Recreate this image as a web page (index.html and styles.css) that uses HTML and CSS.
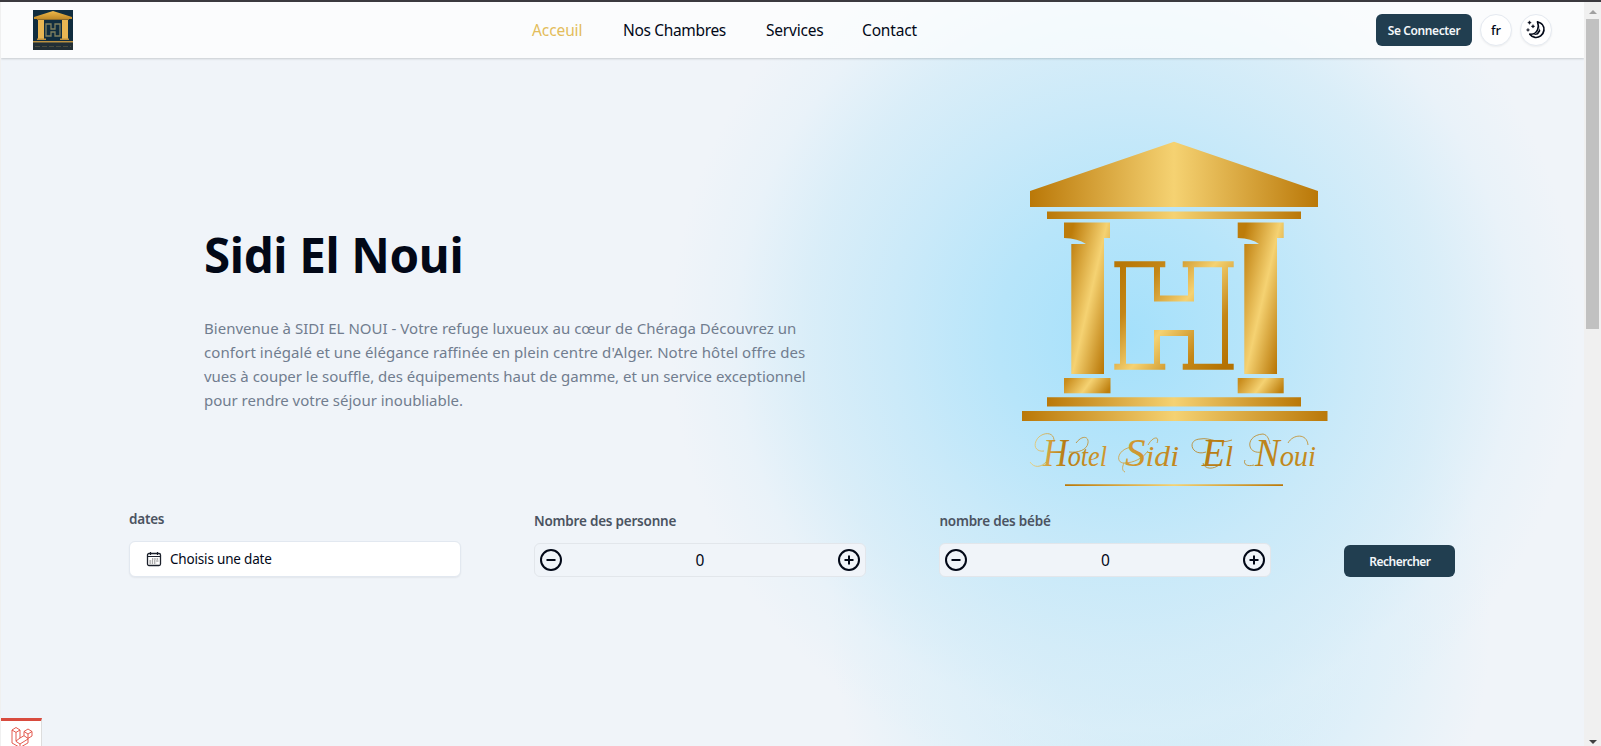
FILE: index.html
```html
<!DOCTYPE html>
<html lang="fr">
<head>
<meta charset="utf-8">
<title>Sidi El Noui</title>
<link rel="stylesheet" href="styles.css">
</head>
<body>
<div class="window">
<div class="page">
  <header class="header">
    <svg class="brand" viewBox="0 0 40 40">
      <defs>
        <linearGradient id="gs" x1="0" x2="0" y1="0" y2="1"><stop offset="0" stop-color="#f0b94a"/><stop offset="1" stop-color="#c08a28"/></linearGradient>
      </defs>
      <rect width="40" height="40" fill="#102d3f"/>
      <path d="M1 7 20 1 39 7V9H1Z" fill="url(#gs)"/>
      <path d="M4 9.500H36" stroke="#8a6a2c"/>
      <path d="M5 10h6v19H5zM29 10h6v19h-6z" fill="#e8b653"/>
      <path d="M13 14h5v5h4v-5h5v12h-5v-4h-4v4h-5z" fill="none" stroke="#7f8060" stroke-width="1.300"/>
      <path d="M4 28.500h9v1.500H4zM27 28.500h9v1.500h-9zM0 31H40v1.500H0z" fill="#bd9140"/>
      <rect y="33" width="40" height="7" fill="#222f35"/>
      <path d="M2 36.500H38" stroke="#484c40" stroke-dasharray="5 2"/>
    </svg>
    <nav class="nav">
      <a class="nav-link active">Acceuil</a>
      <a class="nav-link chambres">Nos Chambres</a>
      <a class="nav-link services">Services</a>
      <a class="nav-link">Contact</a>
    </nav>
    <div class="actions">
      <button class="button connect">Se Connecter</button>
      <button class="round">fr</button>
      <button class="round">
        <svg width="20" height="20" viewBox="0 0 20 20"><path d="M11.500 1.800C16 3 18.400 6.300 17.900 10.500 17.200 15 13 18 9 17.400 6.700 17 5 15.800 3.800 14.200 7 14.500 10.500 12.800 11.700 9.500 12.600 7 12.500 4.500 11.500 1.800Z" fill="none" stroke="#020817" stroke-width="1.700" stroke-linejoin="round"/><path d="m12.800 5 .8 4-2.600 4-4 2.300 5-.8 2.400-3.500z" fill="#020817"/><path d="m3.500.8.600 1.200 1.200.6-1.200.6-.6 1.200-.6-1.200-1.200-.6L2.900 2zM7 4.500l.6 1.200 1.200.6-1.200.6L7 8.100l-.6-1.200-1.200-.6 1.200-.6zM2 8.300l.5 1.100 1.100.5-1.100.5-.5 1.100-.5-1.100-1.100-.5 1.100-.5z" fill="#020817" stroke="#020817" stroke-width=".4"/></svg>
      </button>
    </div>
  </header>
  <main>
    <section class="hero">
      <div class="intro">
        <h1 class="title">Sidi El Noui</h1>
        <p class="lead"><span class="l1">Bienvenue à SIDI EL NOUI - Votre refuge luxueux au cœur de Chéraga Découvrez un</span><br><span class="l2">confort inégalé et une élégance raffinée en plein centre d'Alger. Notre hôtel offre des</span><br><span class="l3">vues à couper le souffle, des équipements haut de gamme, et un service exceptionnel</span><br><span class="l3">pour rendre votre séjour inoubliable.</span></p>
      </div>
      <svg class="temple" viewBox="0 0 350 380">
        <defs>
          <linearGradient id="bar"><stop offset="0" stop-color="#ba7808"/><stop offset=".5" stop-color="#f5d272"/><stop offset="1" stop-color="#ba7808"/></linearGradient>
          <linearGradient id="col" x1="0" y1=".38" x2="1" y2=".62"><stop offset="0" stop-color="#c98c1c"/><stop offset=".5" stop-color="#f5d272"/><stop offset="1" stop-color="#be7f0e"/></linearGradient>
          <linearGradient id="cl" gradientUnits="userSpaceOnUse" x1="56" y1="180" x2="117" y2="194"><stop offset="0" stop-color="#bd7c0a"/><stop offset=".52" stop-color="#f5d272"/><stop offset="1" stop-color="#b87606"/></linearGradient>
          <linearGradient id="cr" gradientUnits="userSpaceOnUse" x1="229" y1="180" x2="290" y2="194"><stop offset="0" stop-color="#bd7c0a"/><stop offset=".52" stop-color="#f5d272"/><stop offset="1" stop-color="#b87606"/></linearGradient>
          <linearGradient id="hl" gradientUnits="userSpaceOnUse" x1="118" y1="150" x2="230" y2="240"><stop offset="0" stop-color="#b87706"/><stop offset=".22" stop-color="#c48616"/><stop offset=".5" stop-color="#f5d272"/><stop offset=".78" stop-color="#c48616"/><stop offset="1" stop-color="#b47201"/></linearGradient>
          <linearGradient id="txt" gradientUnits="userSpaceOnUse" x1="30" y1="0" x2="318" y2="0"><stop offset="0" stop-color="#f2cf6e"/><stop offset=".12" stop-color="#b77b13"/><stop offset=".3" stop-color="#d5a039"/><stop offset=".6" stop-color="#b77b13"/><stop offset="1" stop-color="#c48c22"/></linearGradient>
        </defs>
        <path d="M30 71 174 21.700 318 71v16H30z" fill="url(#bar)"/>
        <path d="M47 91.500h254v7.500H47z" fill="url(#bar)"/>
        <path d="M64 102.500h46v15.500h-6v136H71.300V124H86Q78 118.500 64 118z" fill="url(#cl)"/>
        <path d="M237.700 102.500h46v15.500h-6.700v136h-32.700V124H259Q252 118.500 237.700 118z" fill="url(#cr)"/>
        <rect x="64" y="258" width="46.500" height="15.300" fill="url(#col)"/>
        <rect x="237.700" y="258" width="46" height="15.300" fill="url(#col)"/>
        <path d="M47 277.300h254v9.300H47z" fill="url(#bar)"/>
        <path d="M22 291h305.500v10H22z" fill="url(#bar)"/>
        <path d="M114.300 144.300h51M182.700 144.300h51M157 146v32.600h34V146M157 245v-32h34v32M123 146v99M225 146v99M114.300 246.800h51M182.700 246.800h51" fill="none" stroke="url(#hl)" stroke-width="6"/>
        <g class="script" fill="url(#txt)">
          <text x="43" y="346" textLength="64" lengthAdjust="spacingAndGlyphs"><tspan class="cap">H</tspan>otel</text>
          <text x="125" y="346" textLength="54" lengthAdjust="spacingAndGlyphs"><tspan class="cap">S</tspan>idi</text>
          <text x="202" y="346" textLength="31" lengthAdjust="spacingAndGlyphs"><tspan class="cap">E</tspan>l</text>
          <text x="255" y="346" textLength="61" lengthAdjust="spacingAndGlyphs"><tspan class="cap">N</tspan>oui</text>
        </g>
        <g fill="none" stroke="url(#txt)" stroke-width=".8">
          <path d="M54 322C55 310 40 312 36 321 33 328 38 332 44 331M47 341C41 348 34 348 30 342M76 323C82 315 89 316 88 323 87 330 78 333 69 332"/>
          <path d="M132 327C117 329 115 343 124 343 134 343 143 338 148 331M124 343C122 347 122 351 125 352M148 325C153 316 160 316 157 323"/>
          <path d="M206 332C192 337 186 320 200 319 211 317 218 325 232 320M203 343C205 350 214 349 219 345"/>
          <path d="M262 332C246 335 245 315 263 314 268 315 269 320 270 324M254 345C247 347 243 344 245 340M288 323C293 314 307 313 308 325"/>
        </g>
        <path d="M65 364.200h218v1.700H65z" fill="url(#bar)"/>
      </svg>
    </section>
    <form class="search">
      <div class="field dates">
        <label class="label">dates</label>
        <div class="date-input">
          <svg width="16" height="16" viewBox="0 0 16 16" fill="none" stroke="#1b202b"><rect x="1.500" y="2.500" width="13" height="12" rx="1.500" stroke-width="1.300"/><path d="M1.500 5.500h13M4.500 1v3M11.500 1v3" stroke-width="1.200"/><path d="M6 8h7M3.500 10h9.500M3.500 12h7" stroke-dasharray="1.300 1" stroke="#555"/></svg>
          <span class="date-text">Choisis une date</span>
        </div>
      </div>
      <div class="field">
        <label class="label">Nombre des personne</label>
        <div class="counter">
          <svg class="step" viewBox="0 0 22 22"><circle cx="11" cy="11" r="10"/><path d="M6.500 11h9"/></svg>
          <span>0</span>
          <svg class="step" viewBox="0 0 22 22"><circle cx="11" cy="11" r="10"/><path d="M6.500 11h9M11 6.500v9"/></svg>
        </div>
      </div>
      <div class="field babies">
        <label class="label">nombre des bébé</label>
        <div class="counter">
          <svg class="step" viewBox="0 0 22 22"><circle cx="11" cy="11" r="10"/><path d="M6.500 11h9"/></svg>
          <span>0</span>
          <svg class="step" viewBox="0 0 22 22"><circle cx="11" cy="11" r="10"/><path d="M6.500 11h9M11 6.500v9"/></svg>
        </div>
      </div>
      <button type="button" class="button find">Rechercher</button>
    </form>
  </main>
  <div class="debug">
    <svg width="22" height="22" viewBox="0 0 22 22" fill="none" stroke="#e0483c" stroke-width=".9" stroke-linejoin="round"><path d="M1 4 5 1.500 9 4v8l4-2.300V5.500L17 3l4 2.500V10l-4 2.400v4.500L9 21.500 1 17zM1 4l4 2.400L9 4M5 6.400v9L9 18l8-5M9 12l-4 3M13 5.500 17 8l4-2.500M17 8v4.400l-4-2.700M9 18v3.500"/></svg>
  </div>
</div>
<div class="scrollbar"><i class="up"></i><div class="thumb"></div><i class="down"></i></div>
</div>
</body>
</html>
```
FILE: styles.css
```css
* { box-sizing: border-box; }
body { margin: 0; color: #020817; font-family: "Noto Sans", sans-serif; overflow: hidden; }
.window { display: flex; height: 746px; border-top: 2px solid #3b3a3f; background: #f0f0f0; }
.page {
  width: 1583px; margin-left: 1px; position: relative; overflow: hidden;
  background:
    radial-gradient(circle 455px at 1124px 335px, #a4e0fb 0, #b7e5fa 28%, rgba(200,233,249,.95) 50%, rgba(212,236,248,.8) 70%, rgba(225,240,249,.45) 86%, rgba(240,244,249,0) 100%),
    radial-gradient(ellipse 330px 360px at 1160px 620px, #cbebf9 0, #d2ecf8 35%, #e0f0f9 65%, rgba(240,244,249,0) 100%)
    #f0f4f9;
}
.header {
  height: 56px; padding: 0 32px; display: grid; grid-template-columns: 499px 1fr auto; align-items: center;
  background: rgba(255,255,255,.7); box-shadow: 0 1px 2px rgba(0,0,0,.17);
}
.brand { width: 40px; height: 40px; }
.nav { display: flex; gap: 40px; font-size: 15.5px; line-height: 24px; white-space: nowrap; }
.nav-link { width: 51px; letter-spacing: -.15px; }
.nav-link.active { color: #e3bd5b; letter-spacing: -.1px; }
.nav-link.chambres { width: 103px; letter-spacing: -.34px; }
.nav-link.services { width: 56px; letter-spacing: -.2px; }
.actions { display: flex; gap: 8px; align-items: center; }
.button { height: 32px; border: 0; border-radius: 6px; padding: 0; background: #213e50; color: #f3f7fa; font: 600 12px "Noto Sans", sans-serif; }
.connect { width: 96px; letter-spacing: -.4px; }
.round { width: 32px; height: 32px; padding: 0; border-radius: 50%; border: 1px solid #e5eaf1; background: #fff; display: grid; place-items: center; font: 500 13px "Noto Sans", sans-serif; color: #020817; box-shadow: 0 1px 2px rgba(0,0,0,.06); }
.hero { height: 442px; display: grid; grid-template-columns: 795px 350px; column-gap: 1px; padding: 62px 0 0 203px; }
.intro { padding-top: 105px; }
.title { margin: 0; font-size: 47.5px; line-height: 60px; font-weight: 700; letter-spacing: -.35px; white-space: nowrap; }
.lead { margin: 31px 0 0; font-size: 15px; line-height: 24px; color: #717d8f; white-space: nowrap; }
.l1 { letter-spacing: .02px; }
.l2 { letter-spacing: .07px; }
.l3 { letter-spacing: -.015px; }
.temple { width: 350px; height: 380px; }
.script { font: italic 30px "Liberation Serif", serif; }
.cap { font-size: 39px; }
.search { display: flex; align-items: flex-start; padding: 8px 0 0 128px; }
.field { width: 332px; margin-right: 73.4px; padding-top: 3px; }
.field.dates { padding-top: 1px; margin-right: 73px; }
.field.babies { margin-right: 73px; }
.label { display: block; font-size: 13.5px; line-height: 20px; font-weight: 600; letter-spacing: -.22px; color: #4b5361; white-space: nowrap; }
.date-input { margin-top: 12px; height: 36px; display: flex; gap: 8px; align-items: center; padding-left: 16px; border: 1px solid #e2e8f0; border-radius: 6px; background: #fff; font-size: 13.5px; letter-spacing: -.18px; box-shadow: 0 1px 2px rgba(0,0,0,.06); }
.counter { margin-top: 12px; height: 34px; display: flex; align-items: center; justify-content: space-between; padding: 0 5px; border: 1px solid #e2e6eb; border-radius: 6px; background: #f0f4f9; font-size: 15.5px; }
.step { width: 22px; height: 22px; fill: none; stroke: #020817; stroke-width: 2; }
.find { width: 111px; margin-top: 37px; letter-spacing: -.5px; }
.debug { position: absolute; left: 0; bottom: 0; width: 41px; height: 28px; padding: 5px 0 0 10px; border-top: 3px solid #d84b3e; border-right: 1px solid #ddd; background: #fff; }
.debug svg { display: block; }
.scrollbar { width: 17px; display: flex; flex-direction: column; align-items: center; padding: 8px 0 2px; }
.thumb { width: 13px; height: 310px; background: #c1c1c1; margin-top: 5px; }
.up, .down { border: 4px solid transparent; border-top-width: 0; border-bottom-color: #a0a0a0; }
.down { margin-top: auto; border-top: 4px solid #404040; border-bottom-width: 0; }
```
